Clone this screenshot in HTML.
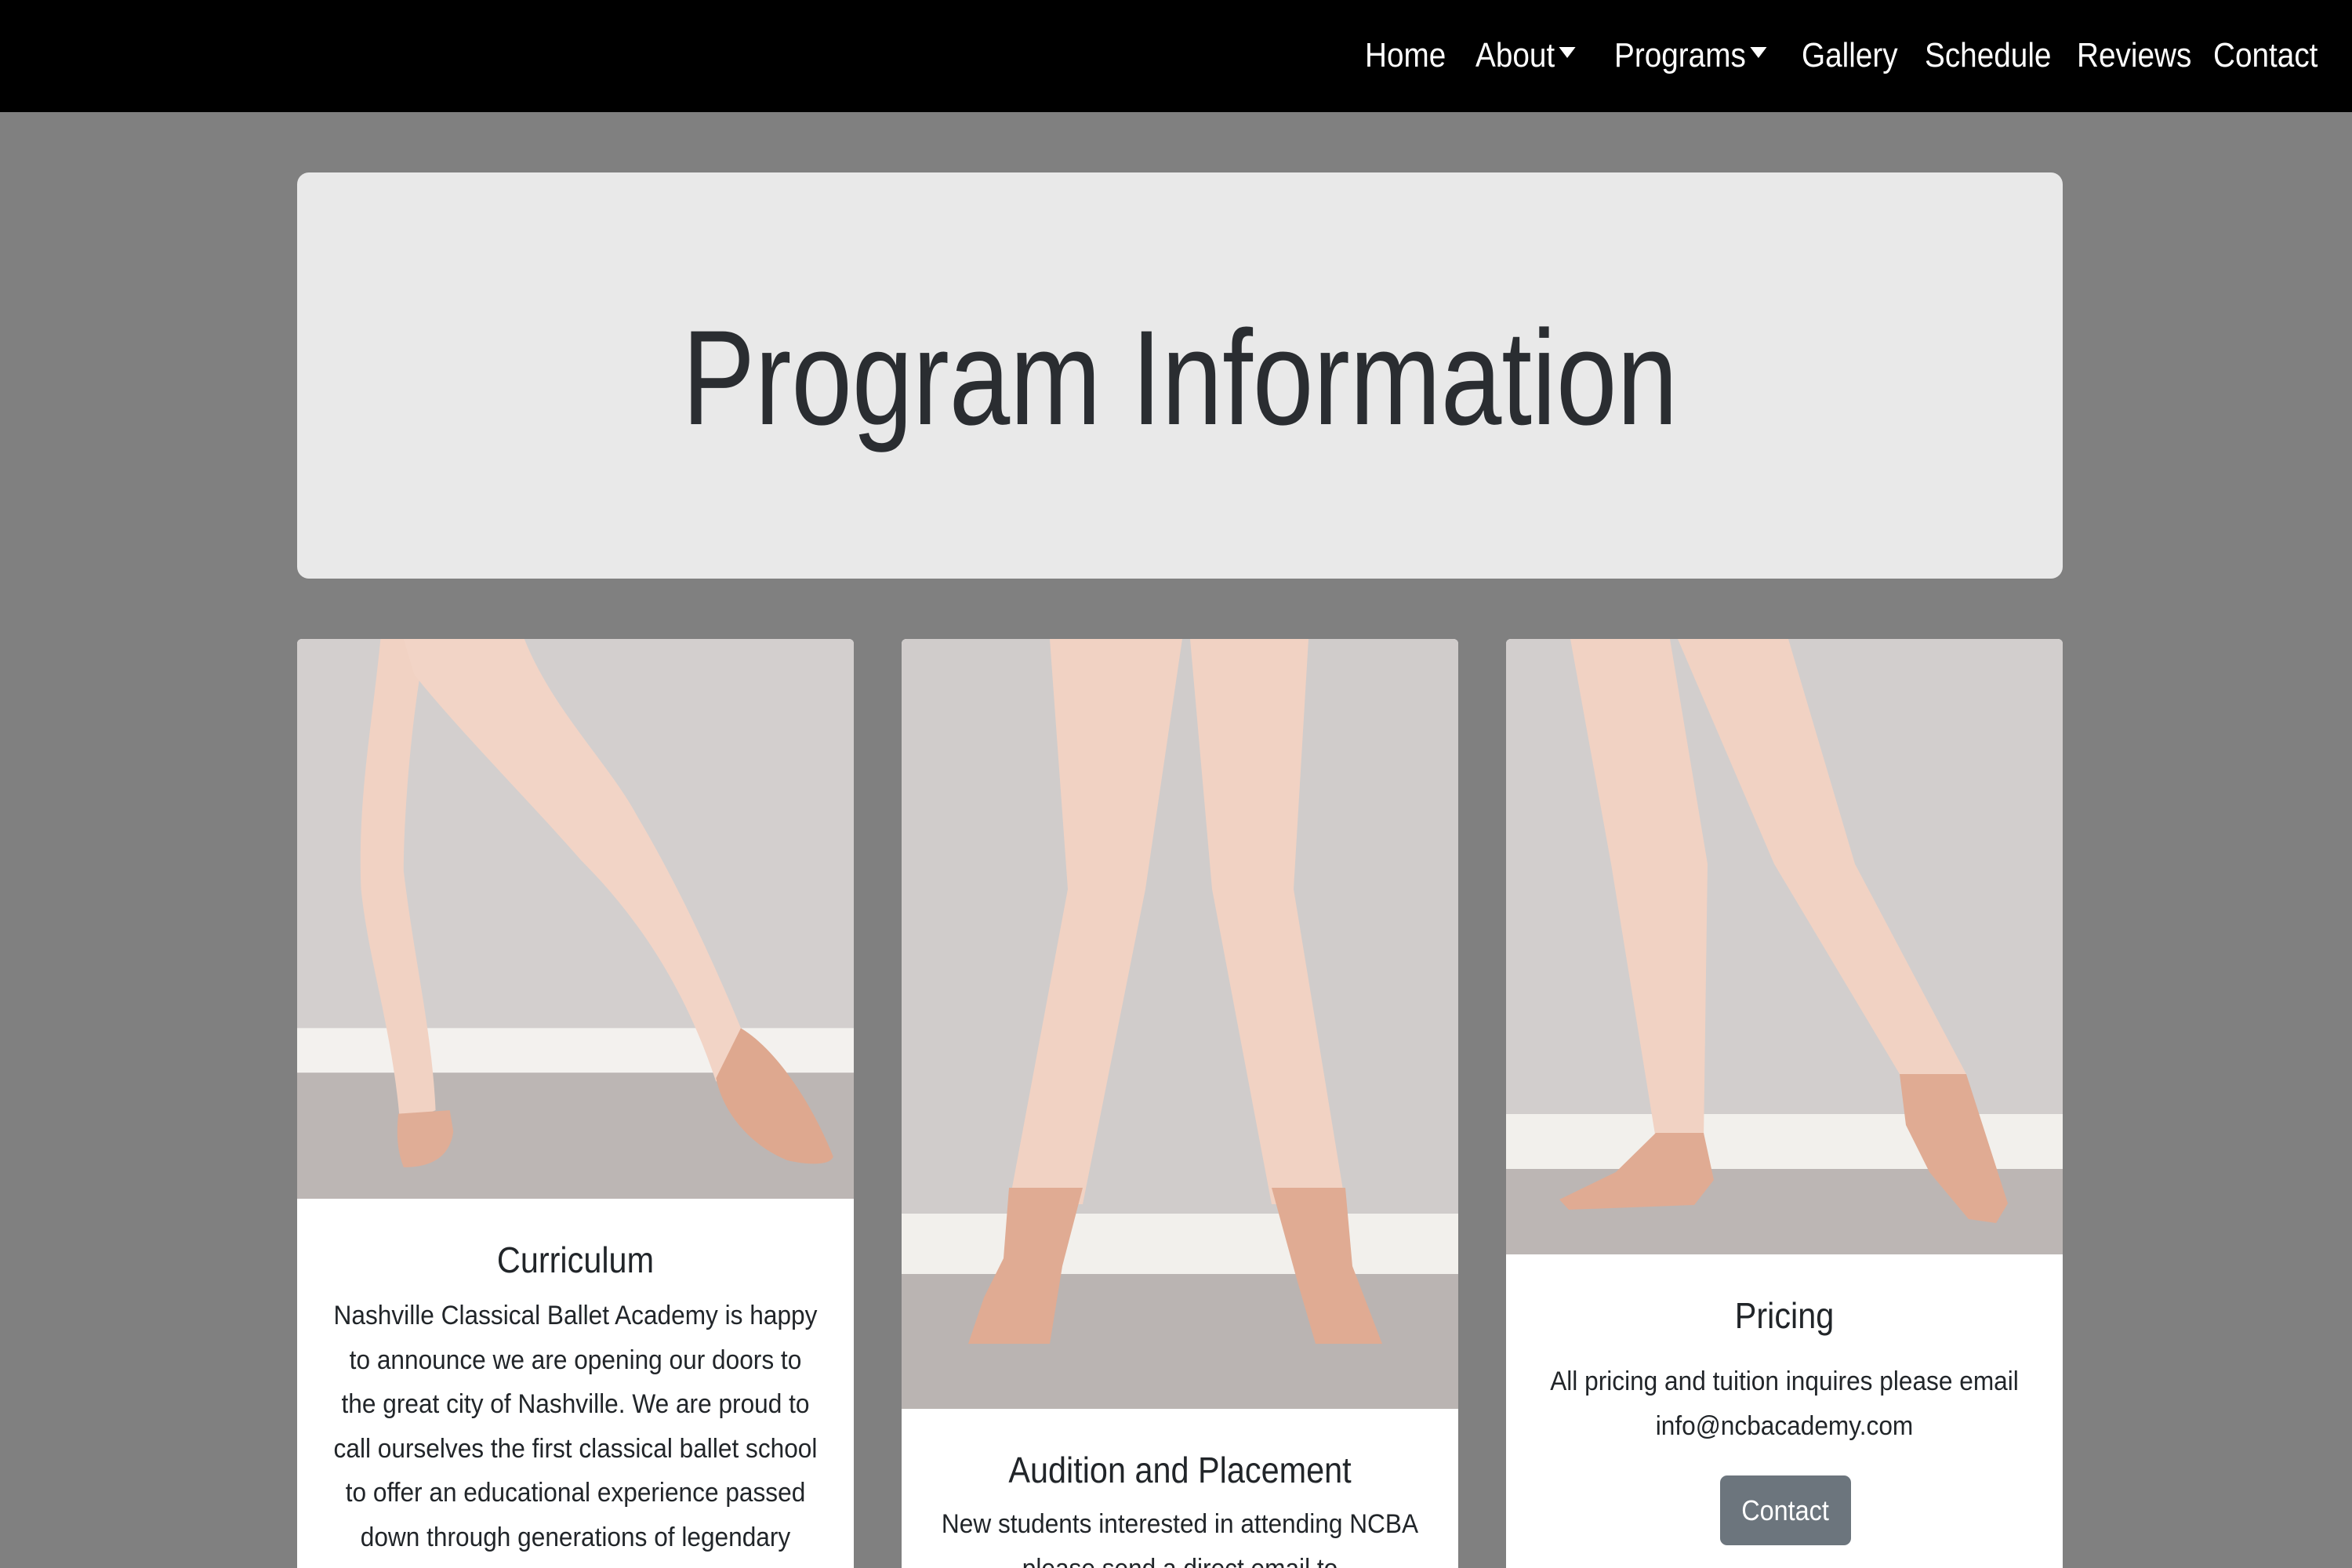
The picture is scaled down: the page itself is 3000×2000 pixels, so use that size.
<!DOCTYPE html>
<html><head><meta charset="utf-8">
<style>
*{margin:0;padding:0;box-sizing:border-box}
html,body{width:3000px;height:2000px;overflow:hidden;background:#808080;font-family:"Liberation Sans Narrow","Liberation Sans",sans-serif;color:#212529}
.nav{position:absolute;left:0;top:0;width:3000px;height:143px;background:#000}
.ni{position:absolute;top:43px;font-size:44px;line-height:56px;color:#fff;white-space:nowrap;transform:scaleX(0.88);transform-origin:left center}
.caret{display:inline-block;width:0;height:0;border-left:12px solid transparent;border-right:12px solid transparent;border-top:14px solid #fff;vertical-align:middle;margin-left:6px;position:relative;top:-6px}
.jumbo{position:absolute;left:379px;top:220px;width:2252px;height:518px;background:#e9e9e9;border-radius:15px}
.jt{position:absolute;left:0;width:100%;top:176px;text-align:center;font-size:172px;line-height:172px;color:#2a2d31;white-space:nowrap;transform:scaleX(0.81)}
.card{position:absolute;top:815px;width:710px;height:1185px;background:#fff;border-radius:6px 6px 0 0;overflow:hidden}
.card svg{position:absolute;left:0;top:0;display:block}
.t{position:absolute;left:0;width:710px;text-align:center;font-size:46px;line-height:56px;white-space:nowrap;transform:scaleX(0.9)}
.b{position:absolute;left:0;width:710px;text-align:center;font-size:34px;line-height:56.5px;white-space:nowrap;transform:scaleX(0.93)}
.btn{position:absolute;left:273px;top:1067px;width:167px;height:89px;background:#6c757d;border-radius:9px;color:#fff;font-size:36px;line-height:89px;text-align:center}
.btn span{display:inline-block;transform:scaleX(0.9)}
</style></head><body>
<div class="nav">
<span class="ni" style="left:1741px">Home</span>
<span class="ni" style="left:1882px">About<span class="caret"></span></span>
<span class="ni" style="left:2059px">Programs<span class="caret"></span></span>
<span class="ni" style="left:2298px">Gallery</span>
<span class="ni" style="left:2455px">Schedule</span>
<span class="ni" style="left:2649px">Reviews</span>
<span class="ni" style="left:2823px">Contact</span>
</div>
<div class="jumbo"><div class="jt">Program Information</div></div>

<div class="card" style="left:379px">
<svg width="710" height="714" viewBox="0 0 1568 1568" preserveAspectRatio="none">
<rect width="1568" height="1568" fill="#d3cfce"/>
<rect y="1090" width="1568" height="125" fill="#f3f1ee"/>
<rect y="1215" width="1568" height="353" fill="#bcb6b4"/>
<path d="M235,0 L330,0 L350,80 C320,250 300,500 300,650 C330,900 380,1100 390,1320 L290,1360 C270,1100 200,900 180,700 C170,450 210,250 235,0 Z" fill="#f1d2c3"/>
<path d="M285,1330 L430,1320 L440,1380 C430,1450 380,1480 300,1480 C280,1430 280,1380 285,1330 Z" fill="#e0ad96"/>
<path d="M300,0 L640,0 C720,200 880,350 960,500 C1050,650 1150,850 1250,1090 L1300,1160 L1180,1240 C1100,1000 980,800 800,620 C650,450 450,250 330,100 Z" fill="#f2d4c6"/>
<path d="M1180,1230 L1250,1090 C1350,1150 1450,1300 1510,1450 C1500,1480 1420,1470 1380,1460 C1280,1420 1200,1330 1180,1230 Z" fill="#dea88f"/>
</svg>
<div class="t" style="top:764px">Curriculum</div>
<div class="b" style="top:835px">Nashville Classical Ballet Academy is happy<br>to announce we are opening our doors to<br>the great city of Nashville. We are proud to<br>call ourselves the first classical ballet school<br>to offer an educational experience passed<br>down through generations of legendary<br>teachers</div>
</div>

<div class="card" style="left:1150px">
<svg width="710" height="982" viewBox="0 0 710 982">
<rect width="710" height="982" fill="#d0cccb"/>
<rect y="733" width="710" height="77" fill="#f2f0ec"/>
<rect y="810" width="710" height="172" fill="#bab4b2"/>
<path d="M189,0 L358,0 L311,319 L231,721 L137,721 L212,319 Z" fill="#f1d2c3"/>
<path d="M137,700 L231,700 L205,800 L189,899 L85,899 L105,840 L130,790 Z" fill="#e0ab93"/>
<path d="M368,0 L519,0 L500,319 L566,721 L472,721 L396,319 Z" fill="#f1d2c3"/>
<path d="M472,700 L566,700 L575,800 L613,899 L528,899 L505,820 Z" fill="#e0ab93"/>
</svg>
<div class="t" style="top:1032px">Audition and Placement</div>
<div class="b" style="top:1101px">New students interested in attending NCBA<br>please send a direct email to</div>
</div>

<div class="card" style="left:1921px">
<svg width="710" height="785" viewBox="0 0 710 785">
<rect width="710" height="785" fill="#d2cecd"/>
<rect y="606" width="710" height="70" fill="#f2f0ec"/>
<rect y="676" width="710" height="109" fill="#bcb6b4"/>
<path d="M82,0 L209,0 L257,287 L252,638 L191,638 L134,287 Z" fill="#f1d2c3"/>
<path d="M191,630 L252,630 L265,690 L240,722 L80,728 L68,715 L140,680 Z" fill="#e0ab93"/>
<path d="M219,0 L360,0 L445,287 L587,555 L502,555 L342,287 Z" fill="#f1d2c3"/>
<path d="M502,555 L587,555 L640,720 L625,745 L590,740 L540,680 L510,620 Z" fill="#e0ab93"/>
</svg>
<div class="t" style="top:835px">Pricing</div>
<div class="b" style="top:919px">All pricing and tuition inquires please email<br>info@ncbacademy.com</div>
<div class="btn"><span>Contact</span></div>
</div>
</body></html>
